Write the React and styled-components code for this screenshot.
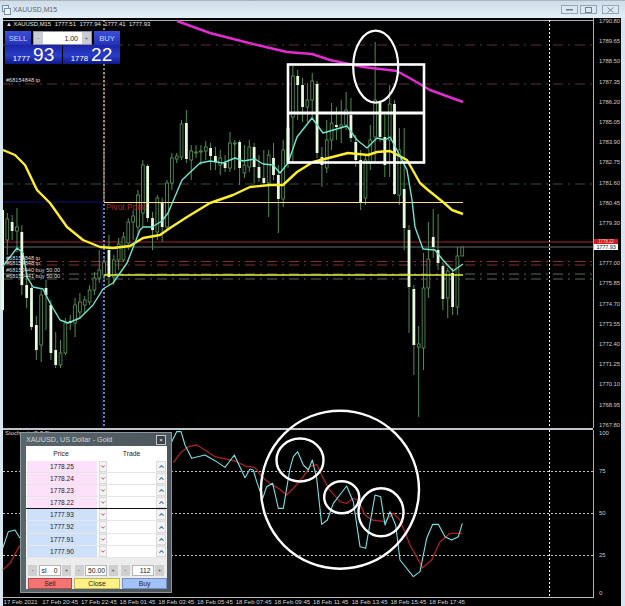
import React from 'react';
import styled, { createGlobalStyle } from 'styled-components';
import { ChevronDown, ChevronUp } from 'lucide-react';

const GlobalStyle = createGlobalStyle`
  html, body {
    margin: 0;
    padding: 0;
    background: #d9e6f2;
    font-family: 'Liberation Sans', Arial, sans-serif;
  }
`;

const Window = styled.div`
  width: 625px;
  height: 606px;
  overflow: hidden;
  display: flex;
  flex-direction: column;
  background: #d7e5f1;
`;

const TitleBar = styled.div`
  height: 18px;
  flex: none;
  display: flex;
  align-items: center;
  gap: 2px;
  padding: 0 6px 0 2px;
  box-sizing: border-box;
  border-top: 1px solid #a9b4bd;
  background: linear-gradient(#cfdde9, #e3eef7);
`;

const TitleIcon = styled.svg`
  width: 9px;
  height: 10px;
  flex: none;
`;

const TitleText = styled.span`
  flex: 1;
  font-size: 6.9px;
  color: #5a6672;
`;

const WinButton = styled.div`
  width: 17px;
  height: 9px;
  margin-left: ${(p) => (p.$wide ? '3px' : '0')};
  display: flex;
  align-items: center;
  justify-content: center;
  border: 1px solid #93a6b6;
  background: #dbe7f1;
  box-sizing: border-box;
`;

const ChartBody = styled.div`
  flex: 1;
  min-height: 0;
  display: grid;
  grid-template-columns: 590px 28px;
  grid-template-rows: 410px 2px 168px 8px;
  padding: 0 4px 0 3px;
`;

const Pane = styled.div`
  position: relative;
  background: #000;
`;

const Plot = styled.svg`
  position: absolute;
  inset: 0;
  width: 100%;
  height: 100%;
  display: block;
  overflow: visible;
`;

const Separator = styled.div`
  grid-column: 1 / 2;
  background: #bfc4c8;
`;

const SeparatorEnd = styled.div`
  background: #000;
`;

const PriceAxis = styled.div`
  position: relative;
  background: #000;
  border-left: 1px solid #aab0b5;
  box-sizing: border-box;
  padding: 2px 0 0 2px;
  overflow: hidden;
  color: #c4c8cc;
  font-size: 6px;
  letter-spacing: -0.1px;
`;

const AxisLabel = styled.div`
  height: ${(p) => p.$h}px;
  line-height: 2px;
  padding-left: 3px;
  white-space: nowrap;
`;

const PriceBadge = styled.div`
  position: absolute;
  left: 0;
  top: ${(p) => p.$top}px;
  width: 24px;
  height: ${(p) => p.$height}px;
  line-height: ${(p) => p.$height}px;
  font-size: ${(p) => p.$height - 0.5}px;
  text-align: center;
  background: ${(p) => p.$bg};
  color: ${(p) => p.$color};
`;

const TimeAxis = styled.div`
  grid-column: 1 / 3;
  display: flex;
  background: #000;
  color: #cfd3d6;
  font-size: 6.1px;
  line-height: 8px;
  overflow: hidden;
`;

const TimeLabel = styled.span`
  width: 38.7px;
  flex: none;
  white-space: nowrap;
  padding-left: 0.5px;
  box-sizing: border-box;
`;

const ChartHeader = styled.div`
  position: absolute;
  top: 3px;
  left: 3px;
  display: flex;
  gap: 3.5px;
  color: #e6e6e6;
  font-size: 5.9px;
  line-height: 7px;
  white-space: nowrap;
`;

const StochName = styled.div`
  position: absolute;
  top: 0;
  left: 2px;
  color: #d8d8d8;
  font-size: 6px;
  line-height: 7px;
`;

const TradePanel = styled.div`
  position: absolute;
  top: 13px;
  left: 2px;
  width: 115px;
  display: grid;
  grid-template-columns: 57px 58px;
  grid-template-rows: 14px 19px;
`;

const OrderRow = styled.div`
  grid-column: 1 / 3;
  display: flex;
  justify-content: space-between;
`;

const OrderButton = styled.div`
  width: 26px;
  display: flex;
  align-items: center;
  justify-content: center;
  background: linear-gradient(#3a4ed8, #2233b8);
  color: #cdd5ff;
  font-size: 7.6px;
`;

const Spinner = styled.div`
  width: 59px;
  box-sizing: border-box;
  display: flex;
  align-items: center;
  background: #fff;
  border: 1px solid #8d93a5;
  color: #222;
  font-size: 7px;
`;

const SpinEnd = styled.div`
  width: 9px;
  height: 100%;
  display: flex;
  align-items: center;
  justify-content: center;
  background: #c9ccd2;
  color: #555;
  font-size: 6px;
`;

const SpinValue = styled.div`
  flex: 1;
  text-align: right;
  padding-right: 4px;
`;

const Quote = styled.div`
  display: flex;
  align-items: baseline;
  justify-content: center;
  gap: 3px;
  margin-left: ${(p) => (p.$right ? '1px' : '0')};
  color: #fff;
  background: linear-gradient(#1a25a8, #2a3cc8 55%, #10188a);
  overflow: hidden;
  line-height: 19px;
`;

const QuoteSmall = styled.span`
  font-size: 7.8px;
`;

const QuoteBig = styled.span`
  font-size: 19px;
`;

const Dialog = styled.div`
  position: absolute;
  top: 2px;
  left: 17px;
  width: 152px;
  height: 161px;
  box-sizing: border-box;
  padding: 0 4px 4px 5px;
  display: flex;
  flex-direction: column;
  background: linear-gradient(90deg, #59666c, #4c565c);
  border: 1px solid #8c969b;
`;

const DialogTitle = styled.div`
  height: 13px;
  flex: none;
  display: flex;
  align-items: center;
  justify-content: space-between;
  color: #cdd5d8;
  font-size: 7.2px;
`;

const CloseButton = styled.div`
  width: 8px;
  height: 8px;
  margin-right: 1px;
  display: flex;
  align-items: center;
  justify-content: center;
  background: #39434a;
  border: 1px solid #c0c6c9;
  color: #fff;
  font-size: 6px;
  line-height: 1;
`;

const DialogBody = styled.div`
  flex: 1;
  display: flex;
  flex-direction: column;
  background: #ececec;
`;

const LadderHead = styled.div`
  height: 15px;
  display: grid;
  grid-template-columns: 70px 1fr;
  background: #fff;
  color: #222;
  font-size: 6.8px;
  line-height: 15px;
  text-align: center;
`;

const LadderRow = styled.div`
  height: 12.1px;
  display: grid;
  grid-template-columns: 70px 10px 49px 10px;
  padding-left: 1px;
  background: #fff;
  box-sizing: border-box;
  border-bottom: ${(p) => (p.$split ? '1px solid #111' : '1px solid #e6e6e6')};
`;

const LadderPrice = styled.div`
  background: ${(p) => (p.$ask ? '#fde0fa' : '#cfe0fa')};
  color: #222;
  font-size: 6.6px;
  line-height: 11px;
  text-align: center;
`;

const ArrowCell = styled.div`
  display: flex;
  align-items: center;
  justify-content: center;
  margin-left: ${(p) => (p.$down ? '2px' : '0')};
  background: #f4f4f4;
  border: 1px solid #dadada;
  box-sizing: border-box;
  color: ${(p) => (p.$down ? '#a13a52' : '#3d6f96')};
`;

const TradeCell = styled.div`
  background: #fff;
`;

const StepRow = styled.div`
  display: flex;
  align-items: center;
  gap: 1.5px;
  margin-top: 7px;
  padding-left: 2px;
  height: 11px;
`;

const StepGroup = styled.div`
  display: flex;
  gap: 1.5px;
  margin-right: 2px;
`;

const StepButton = styled.div`
  width: 9px;
  height: 11px;
  background: #d0d0d0;
  color: #555;
  font-size: 6px;
  line-height: 10px;
  text-align: center;
`;

const StepInput = styled.div`
  width: ${(p) => p.$w}px;
  height: 11px;
  box-sizing: border-box;
  padding: 0 2px;
  display: flex;
  justify-content: space-between;
  background: #fff;
  border: 1px solid #b5b5b5;
  color: #222;
  font-size: 6.8px;
  line-height: 9px;
`;

const ActionRow = styled.div`
  display: flex;
  gap: 2.5px;
  margin-top: 2px;
  padding-left: 2px;
`;

const ActionButton = styled.div`
  width: ${(p) => p.$w}px;
  height: 11px;
  background: ${(p) => p.$bg};
  border: 1px solid ${(p) => p.$line};
  box-sizing: border-box;
  color: #302020;
  font-size: 6.8px;
  line-height: 9px;
  text-align: center;
`;

// [bright, bodyTop, bodyBottom, wickTop, wickBottom], left to right, one bar each 4.84px
const candles = [
  [0, 219, 240, 213, 255], [1, 222, 231, 215, 240], [0, 227, 231, 208, 252], [1, 232, 285, 225, 295],
  [1, 285, 298, 270, 308], [1, 288, 327, 283, 330], [1, 325, 350, 316, 360], [0, 295, 345, 290, 362],
  [1, 288, 295, 280, 330], [1, 305, 353, 300, 360], [1, 350, 365, 332, 368], [0, 353, 365, 340, 368],
  [0, 323, 353, 318, 355], [1, 321, 323, 315, 330], [0, 305, 323, 298, 337], [0, 302, 312, 293, 318],
  [0, 300, 305, 296, 313], [0, 290, 302, 285, 305], [0, 278, 290, 272, 295], [0, 270, 278, 250, 283],
  [0, 262, 275, 258, 280], [1, 250, 277, 235, 285], [0, 260, 277, 255, 285], [0, 244, 260, 238, 270],
  [0, 237, 260, 232, 262], [0, 222, 243, 218, 250], [0, 216, 222, 210, 240], [0, 195, 227, 190, 235],
  [0, 165, 213, 160, 227], [1, 166, 218, 164, 222], [1, 218, 230, 212, 250], [0, 198, 232, 195, 240],
  [1, 202, 227, 198, 242], [0, 183, 227, 180, 230], [0, 158, 183, 153, 190], [0, 156, 159, 153, 163],
  [0, 124, 157, 120, 160], [1, 123, 159, 110, 163], [0, 151, 160, 145, 180], [0, 152, 153, 145, 158],
  [0, 151, 152, 145, 165], [0, 147, 151, 141, 160], [1, 148, 156, 143, 170], [1, 156, 162, 147, 170],
  [0, 158, 165, 150, 175], [1, 163, 168, 155, 172], [0, 143, 168, 132, 172], [0, 143, 144, 140, 170],
  [1, 142, 168, 140, 185], [0, 165, 173, 145, 178], [0, 147, 167, 140, 172], [1, 147, 167, 143, 183],
  [1, 167, 178, 155, 182], [1, 178, 183, 150, 186], [0, 155, 183, 150, 217], [1, 158, 175, 143, 180],
  [1, 175, 199, 165, 233], [0, 150, 199, 140, 207], [0, 128, 163, 122, 168], [0, 76, 117, 63, 163],
  [1, 76, 85, 70, 120], [1, 85, 107, 78, 122], [0, 100, 107, 83, 122], [0, 81, 100, 73, 120],
  [1, 84, 153, 81, 158], [1, 157, 165, 147, 187], [0, 140, 168, 120, 173], [0, 123, 140, 103, 150],
  [1, 125, 127, 107, 140], [0, 125, 127, 100, 143], [0, 110, 125, 92, 130], [1, 115, 138, 98, 142],
  [1, 142, 160, 135, 167], [1, 160, 203, 150, 210], [0, 160, 198, 155, 205], [0, 140, 163, 125, 170],
  [0, 100, 137, 42, 163], [1, 103, 137, 100, 142], [1, 137, 165, 115, 177], [0, 104, 140, 85, 177],
  [1, 104, 194, 100, 195], [0, 150, 195, 128, 205], [1, 189, 228, 128, 250], [1, 230, 287, 225, 333],
  [1, 289, 345, 285, 375], [0, 344, 347, 326, 417], [0, 288, 348, 253, 370], [0, 259, 288, 222, 298],
  [1, 237, 247, 209, 258], [1, 250, 263, 214, 270], [1, 266, 299, 262, 310], [0, 271, 298, 268, 318],
  [1, 273, 307, 268, 315], [0, 256, 307, 247, 315], [0, 247, 256, 247, 256],
];

const magenta = '177,21 210,33 245,42 270,48 287,52 312,54 330,60 363,67 397,71 413,80 430,90 463,102';
const yellow = '3,150 15,155 25,165 37,190 50,203 67,227 83,240 100,247 113,248 130,246 143,238 160,235 170,228 187,217 210,203 233,195 250,187 270,185 283,185 297,172 313,162 348,153 368,155 377,152 390,151 407,160 420,183 428,190 443,202 452,210 463,214';
const aqua = '3,266 17,248 23,253 27,277 33,287 43,289 50,303 60,320 68,323 80,318 93,305 103,289 113,283 127,263 140,230 143,227 152,227 162,221 168,213 182,180 200,163 210,161 223,163 235,158 243,161 255,159 263,164 273,165 280,173 288,163 297,137 312,118 323,133 347,126 357,140 367,148 377,138 385,140 390,137 398,152 407,170 412,200 415,227 423,249 435,250 443,260 453,271 463,264';

// stochastic traces were read at 3x, so keep them in those units and scale to page px
const scaled = (left, top, pts) => pts.map(([x, y]) => `${left + x / 3},${top + y / 3}`).join(' ');

const stochMain = [
  scaled(0, 425, [[8, 370], [25, 320], [45, 315], [60, 340]]),
  [
    scaled(165, 425, [[20, 50], [35, 20], [48, 20], [60, 60], [80, 100], [120, 90], [150, 107], [180, 127], [208, 90], [240, 158], [255, 132]]),
    scaled(250, 405, [[10, 195], [20, 230], [38, 280], [50, 245], [68, 235], [85, 310], [100, 310], [120, 190], [130, 155], [143, 140], [160, 180], [175, 195], [187, 165], [200, 220], [215, 358], [232, 345], [250, 295], [290, 243], [310, 290], [330, 425], [347, 430], [375, 270], [392, 275], [405, 360], [420, 320], [437, 360], [450, 465], [490, 515], [510, 500], [530, 400], [548, 358], [565, 358], [585, 395], [605, 405], [625, 395], [637, 355]]),
  ].join(' '),
];

const stochSignal = [
  scaled(0, 425, [[8, 435], [30, 415], [60, 360]]),
  [
    scaled(165, 425, [[25, 113], [45, 85], [70, 65], [95, 60], [120, 75], [150, 95], [210, 108], [245, 125]]),
    scaled(250, 405, [[0, 185], [15, 188], [35, 215], [60, 235], [85, 250], [110, 270], [130, 250], [160, 215], [180, 185], [200, 178], [215, 210], [235, 250], [270, 290], [290, 295], [310, 280], [325, 285], [345, 330], [365, 345], [405, 350], [430, 325], [450, 345], [480, 420], [518, 488], [545, 465], [570, 410], [600, 385], [637, 385]]),
  ].join(' '),
];

const priceLines = [
  { y: 45, color: '#5e3032', dash: '10 5 2 5' },
  { y: 84, color: '#5e3032', dash: '10 5 2 5' },
  { y: 184, color: '#33503e', dash: '10 5 2 5' },
  { y: 242, color: '#a82428' },
  { y: 247, color: '#6a6a6a' },
  { y: 261.5, color: '#8c2e30', dash: '10 5 2 5' },
  { y: 265, color: '#7a3034', dash: '10 5 2 5' },
  { y: 274, color: '#5c6e5c', dash: '10 5 2 5' },
  { y: 279, color: '#5a6458', dash: '10 5 2 5' },
];

// the 1778.15 tick sits under the live price badges, as in the terminal
const axisPrices = Array.from({ length: 21 }, (_, i) => (1790.8 - i * 1.15).toFixed(2));

const stochLabels = [
  { text: '100', h: 38.3 },
  { text: '75', h: 42 },
  { text: '50', h: 42 },
  { text: '25', h: 38 },
  { text: '0', h: 4 },
];

const timeLabels = [
  '17 Feb 2021', '17 Feb 20:45', '17 Feb 22:45', '18 Feb 01:45', '18 Feb 03:45', '18 Feb 05:45',
  '18 Feb 07:45', '18 Feb 09:45', '18 Feb 11:45', '18 Feb 13:45', '18 Feb 15:45', '18 Feb 17:45',
];

const askLevels = ['1778.25', '1778.24', '1778.23', '1778.22'];
const bidLevels = ['1777.93', '1777.92', '1777.91', '1777.90'];

const Candle = ({ bar, i }) => {
  const [bright, top, bottom, wickTop, wickBottom] = bar;
  const x = 7.3 + i * 4.84;
  return (
    <g>
      <line x1={x} x2={x} y1={wickTop} y2={wickBottom} stroke="#4f8f52" strokeWidth="1" />
      <rect
        x={x - 1.4}
        y={top}
        width="2.8"
        height={bottom - top}
        fill={bright ? '#e6fcdc' : '#000'}
        stroke={bright ? 'none' : '#5c9a5c'}
        strokeWidth="0.8"
      />
    </g>
  );
};

const MainChart = () => (
  <Plot viewBox="3 18 590 410">
    <line x1="3" x2="593" y1="20.5" y2="20.5" stroke="#aab0b5" />
    <line x1="3" x2="104" y1="202" y2="202" stroke="#10107a" strokeWidth="1.2" />
    <line x1="102" x2="102" y1="202" y2="428" stroke="#10107a" strokeWidth="1.2" />
    {priceLines.map((l) => (
      <line key={l.y} x1="3" x2="593" y1={l.y} y2={l.y} stroke={l.color} strokeDasharray={l.dash} />
    ))}
    <line x1="104" x2="104" y1="20" y2="428" stroke="#fff" strokeDasharray="2 2" />
    <line x1="104" x2="104" y1="72" y2="202" stroke="#b58c68" strokeDasharray="3 1" />
    <line x1="104" x2="104" y1="150" y2="202" stroke="#8d7a68" strokeWidth="1.2" />
    <line x1="549.5" x2="549.5" y1="20" y2="428" stroke="#fff" strokeDasharray="2 2" />
    <rect x="1.6" y="210" width="2.4" height="100" fill="#e6fcdc" />
    {candles.map((bar, i) => (
      <Candle key={i} bar={bar} i={i} />
    ))}
    <line x1="104" x2="463" y1="202.5" y2="202.5" stroke="#ffe27a" strokeWidth="1.2" />
    <line x1="104" x2="463" y1="275" y2="275" stroke="#e9f23c" strokeWidth="1.4" />
    <polyline points={magenta} fill="none" stroke="#e22cd2" strokeWidth="2.4" strokeLinejoin="round" />
    <polyline points={yellow} fill="none" stroke="#fdee2e" strokeWidth="2.4" strokeLinejoin="round" />
    <polyline points={aqua} fill="none" stroke="#6fe6cf" strokeWidth="1.4" strokeLinejoin="round" />
    <rect x="288" y="64.5" width="136" height="98" fill="none" stroke="#fff" strokeWidth="2.6" />
    <line x1="287" x2="425" y1="113" y2="113" stroke="#fff" strokeWidth="2.8" />
    <ellipse cx="375.7" cy="66.7" rx="22.5" ry="36" fill="none" stroke="#fff" strokeWidth="2.2" />
    <g fontSize="5.6" fill="#dedede" fontFamily="'Liberation Sans', Arial, sans-serif">
      <text x="6" y="82">#68154848 tp</text>
      <text x="6" y="259.5">#68154848 tp</text>
      <text x="6" y="264.5">#68154848 tp</text>
      <text x="6" y="272">#68150440 buy 50.00</text>
      <text x="6" y="277.5">#68150441 buy 50.00</text>
    </g>
    <text x="106" y="210" fontSize="8.4" fill="#a62c2e" fontFamily="'Liberation Sans', Arial, sans-serif">
      Pivot Point
    </text>
  </Plot>
);

const StochChart = () => (
  <Plot viewBox="3 430 590 168">
    {[471.5, 513.5, 555.5].map((y) => (
      <line key={y} x1="3" x2="593" y1={y} y2={y} stroke="#c4c4c4" strokeDasharray="2 2" />
    ))}
    <line x1="549.5" x2="549.5" y1="430" y2="598" stroke="#fff" strokeDasharray="2 2" />
    <line x1="3" x2="593" y1="597.5" y2="597.5" stroke="#b5bcc2" />
    {stochSignal.map((pts) => (
      <polyline key={pts} points={pts} fill="none" stroke="#a92024" strokeWidth="1.3" strokeLinejoin="round" />
    ))}
    {stochMain.map((pts) => (
      <polyline key={pts} points={pts} fill="none" stroke="#74e3e3" strokeWidth="1.1" strokeLinejoin="round" />
    ))}
    <circle cx="340" cy="489.7" r="79" fill="none" stroke="#fff" strokeWidth="2.4" />
    <ellipse cx="300" cy="460" rx="23.5" ry="21.5" fill="none" stroke="#fff" strokeWidth="2.4" />
    <ellipse cx="341.7" cy="497.3" rx="17.5" ry="16" fill="none" stroke="#fff" strokeWidth="2.4" />
    <ellipse cx="381" cy="512.3" rx="22.5" ry="24" fill="none" stroke="#fff" strokeWidth="2.4" />
  </Plot>
);

const Stepper = ({ w, label, value }) => (
  <StepGroup>
    <StepButton>-</StepButton>
    <StepInput $w={w}>
      <span>{label}</span>
      <span>{value}</span>
    </StepInput>
    <StepButton>+</StepButton>
  </StepGroup>
);

const LadderLine = ({ price, ask, split }) => (
  <LadderRow $split={split}>
    <LadderPrice $ask={ask}>{price}</LadderPrice>
    <ArrowCell $down>
      <ChevronDown size={7} strokeWidth={3.5} />
    </ArrowCell>
    <TradeCell />
    <ArrowCell>
      <ChevronUp size={7} strokeWidth={3.5} />
    </ArrowCell>
  </LadderRow>
);

const App = () => (
  <Window>
    <GlobalStyle />
    <TitleBar>
      <TitleIcon viewBox="0 0 9 10">
        <rect x="0.5" y="0.5" width="6" height="6" fill="#e8f0f6" stroke="#7590a8" />
        <rect x="2.5" y="3.5" width="6" height="6" fill="#f2f6fa" stroke="#7590a8" />
      </TitleIcon>
      <TitleText>XAUUSD,M15</TitleText>
      <WinButton>
        <svg width="7" height="3" viewBox="0 0 7 3"><rect y="1" width="7" height="1.6" fill="#6e8294" /></svg>
      </WinButton>
      <WinButton>
        <svg width="7" height="6" viewBox="0 0 7 6"><rect x="0.5" y="0.5" width="6" height="5" fill="none" stroke="#6e8294" /></svg>
      </WinButton>
      <WinButton $wide>
        <svg width="7" height="6" viewBox="0 0 7 6"><path d="M0.5 0.5 L6.5 5.5 M6.5 0.5 L0.5 5.5" stroke="#7d8d9c" /></svg>
      </WinButton>
    </TitleBar>
    <ChartBody>
      <Pane>
        <MainChart />
        <ChartHeader>
          <span>▲ XAUUSD,M15</span>
          <span>1777.51</span>
          <span>1777.94</span>
          <span>1777.41</span>
          <span>1777.93</span>
        </ChartHeader>
        <TradePanel>
          <OrderRow>
            <OrderButton>SELL</OrderButton>
            <Spinner>
              <SpinEnd>-</SpinEnd>
              <SpinValue>1.00</SpinValue>
              <SpinEnd>+</SpinEnd>
            </Spinner>
            <OrderButton>BUY</OrderButton>
          </OrderRow>
          <Quote>
            <QuoteSmall>1777</QuoteSmall>
            <QuoteBig>93</QuoteBig>
          </Quote>
          <Quote $right>
            <QuoteSmall>1778</QuoteSmall>
            <QuoteBig>22</QuoteBig>
          </Quote>
        </TradePanel>
      </Pane>
      <PriceAxis>
        {axisPrices.map((p) => (
          <AxisLabel key={p} $h={20.2}>{p === '1778.15' ? '' : p}</AxisLabel>
        ))}
        <PriceBadge $top={221} $height={5} $bg="#c81e22" $color="#f4c8c8">1778.22</PriceBadge>
        <PriceBadge $top={226} $height={6} $bg="#fff" $color="#111">1777.93</PriceBadge>
      </PriceAxis>
      <Separator />
      <SeparatorEnd />
      <Pane>
        <StochChart />
        <StochName>Stochastic(5,3,3)</StochName>
        <Dialog>
          <DialogTitle>
            <span>XAUUSD, US Dollar - Gold</span>
            <CloseButton>×</CloseButton>
          </DialogTitle>
          <DialogBody>
            <LadderHead>
              <span>Price</span>
              <span>Trade</span>
            </LadderHead>
            {askLevels.map((p, i) => (
              <LadderLine key={p} price={p} ask split={i === 3} />
            ))}
            {bidLevels.map((p) => (
              <LadderLine key={p} price={p} />
            ))}
            <StepRow>
              <Stepper w={22} label="sl" value="0" />
              <Stepper w={22} value="50.00" />
              <Stepper w={22} value="112" />
            </StepRow>
            <ActionRow>
              <ActionButton $w={44} $bg="#f47474" $line="#b04848">Sell</ActionButton>
              <ActionButton $w={46} $bg="#fff184" $line="#c0b85c">Close</ActionButton>
              <ActionButton $w={45} $bg="#a4c2fa" $line="#7890bc">Buy</ActionButton>
            </ActionRow>
          </DialogBody>
        </Dialog>
      </Pane>
      <PriceAxis>
        {stochLabels.map((l) => (
          <AxisLabel key={l.text} $h={l.h}>{l.text}</AxisLabel>
        ))}
      </PriceAxis>
      <TimeAxis>
        {timeLabels.map((t) => (
          <TimeLabel key={t}>{t}</TimeLabel>
        ))}
      </TimeAxis>
    </ChartBody>
  </Window>
);

export default App;
